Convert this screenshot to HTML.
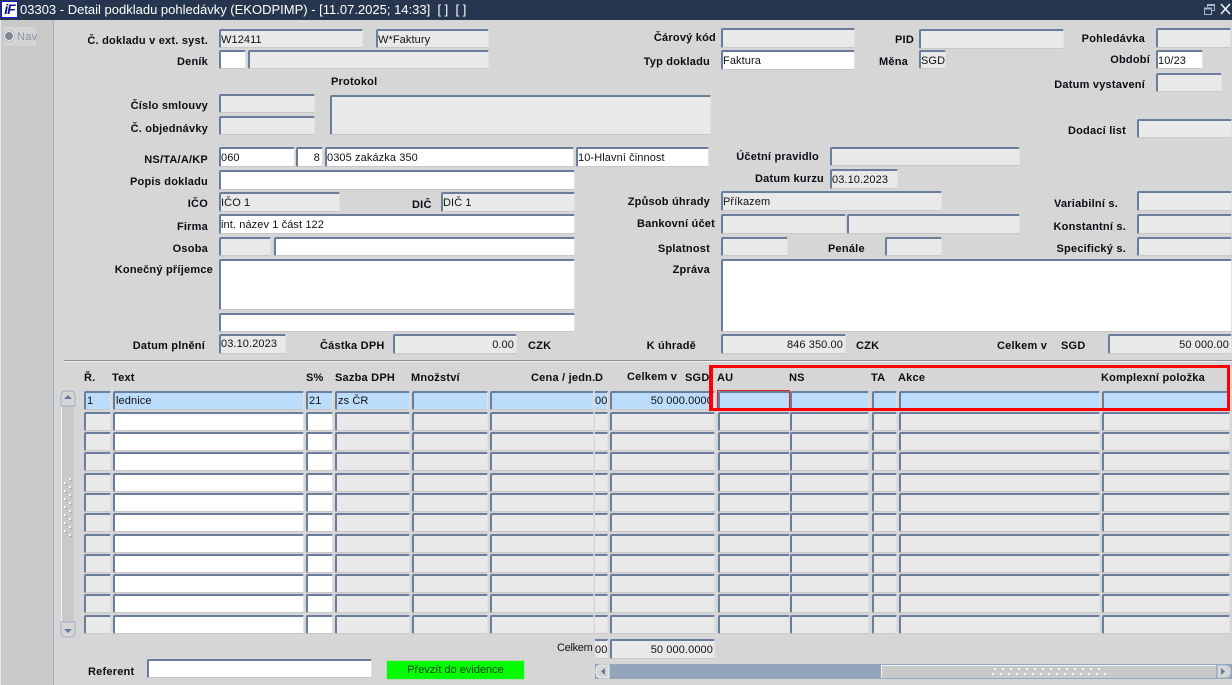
<!DOCTYPE html>
<html><head><meta charset="utf-8"><title>03303</title>
<style>
html,body{margin:0;padding:0}
body{width:1232px;height:685px;position:relative;overflow:hidden;background:#d6d6d6;font:11px "Liberation Sans",sans-serif;color:#000}
div{box-sizing:border-box;position:absolute}
.l{font-weight:bold;white-space:nowrap;line-height:14px;height:14px;color:#0c0c14;letter-spacing:.22px;margin-top:1px}
.f{background:#e9e9e9;border-style:solid;border-color:#6a7d9c #e2e2e2 #c8c8c8 #6a7d9c;border-width:2px 1px 1px 2px;border-radius:2px;line-height:19px;padding-left:0;white-space:nowrap;overflow:hidden;color:#111;letter-spacing:.1px}
.w{background:#fff}
.r{text-align:right;padding-right:2px}
.row{left:0;width:1232px;height:19px}
.row .f{top:0;height:100%;padding-left:1px;line-height:17px}
.b .f{background:#bbdcfb}
.a{left:84px;width:27px}.c{left:113px;width:191px}.d{left:306px;width:27px}.e{left:335px;width:75px}.g{left:412px;width:76px}.h{left:490px;width:104px}.row .i{left:595px;width:13px;border-left:0;padding:0;text-align:right;border-radius:0}.j{left:610px;width:105px}.k{left:718px;width:72px}.m{left:790px;width:79px}.n{left:872px;width:25px}.o{left:899px;width:201px}.p{left:1102px;width:128px}
.a2 .c,.a2 .d{background:#fff}
.dots{width:2px;height:2px;background:#f4f6fa;box-shadow:1px 1px 0 #9aa9bf}
</style></head><body>

<!-- title bar -->
<div style="left:0;top:0;width:1232px;height:20px;background:#27364f"></div>
<div style="left:1px;top:1px;width:17px;height:17px;background:#fff;border:1px solid #1a1ad0;color:#10109a;font:italic bold 14px/15px 'Liberation Sans',sans-serif;text-align:center;letter-spacing:-1px">iF</div>
<div style="left:20px;top:1px;height:18px;line-height:18px;font-size:13px;color:#fff;white-space:nowrap">03303 - Detail podkladu pohledávky (EKODPIMP) - [11.07.2025; 14:33]&nbsp; [ ]&nbsp; [ ]</div>
<svg style="position:absolute;left:1204px;top:4px" width="11" height="11" viewBox="0 0 11 11"><path d="M3.500 3V.5H10.500V6.500H8M.5 4H7.500V10.500H.5Z" fill="none" stroke="#aab4c4"/><path d="M3 1.500H11M0 5H8" stroke="#aab4c4"/></svg>
<svg style="position:absolute;left:1220px;top:3px" width="11" height="12" viewBox="0 0 11 12"><path d="M1 1L10 11M10 1L1 11" stroke="#f2f4f8" stroke-width="1.500"/></svg>

<!-- nav strip -->
<div style="left:1px;top:20px;width:52px;height:665px;background:#c9c9c9"></div>
<div style="left:53px;top:20px;width:1px;height:665px;background:#9fb0c6"></div>
<div style="left:0;top:20px;width:1px;height:665px;background:#e8e8e8"></div>
<div style="left:4px;top:27px;width:32px;height:19px;background:#d4d4d4"></div>
<div style="left:4px;top:31px;width:10px;height:10px;border-radius:50%;background:#7f8590;border:1px solid #eef1f5;box-shadow:0 0 0 1px #b4c0d2"></div>
<div style="left:17px;top:30px;line-height:14px;color:#8894aa;font-size:11px;letter-spacing:.3px">Nav</div>

<!-- upper labels -->
<div class="l" style="right:1024px;top:33px">Č. dokladu v ext. syst.</div>
<div class="l" style="right:1024px;top:54px">Deník</div>
<div class="l" style="left:331px;top:74px">Protokol</div>
<div class="l" style="right:1024px;top:98px">Číslo smlouvy</div>
<div class="l" style="right:1024px;top:121px">Č. objednávky</div>
<div class="l" style="right:1024px;top:152px">NS/TA/A/KP</div>
<div class="l" style="right:1024px;top:174px">Popis dokladu</div>
<div class="l" style="right:1024px;top:196px">IČO</div>
<div class="l" style="left:412px;top:197px">DIČ</div>
<div class="l" style="right:1024px;top:219px">Firma</div>
<div class="l" style="right:1024px;top:241px">Osoba</div>
<div class="l" style="right:1019px;top:262px">Konečný příjemce</div>
<div class="l" style="right:1027px;top:338px">Datum plnění</div>
<div class="l" style="left:320px;top:338px">Částka DPH</div>
<div class="l" style="left:528px;top:338px">CZK</div>
<div class="l" style="right:516px;top:30px">Čárový kód</div>
<div class="l" style="right:522px;top:54px">Typ dokladu</div>
<div class="l" style="right:318px;top:32px">PID</div>
<div class="l" style="right:324px;top:54px">Měna</div>
<div class="l" style="right:87px;top:31px">Pohledávka</div>
<div class="l" style="right:82px;top:52px">Období</div>
<div class="l" style="right:87px;top:77px">Datum vystavení</div>
<div class="l" style="right:106px;top:123px">Dodací list</div>
<div class="l" style="right:413px;top:149px">Účetní pravidlo</div>
<div class="l" style="right:408px;top:171px">Datum kurzu</div>
<div class="l" style="right:522px;top:194px">Způsob úhrady</div>
<div class="l" style="right:114px;top:196px">Variabilní s.</div>
<div class="l" style="right:517px;top:216px">Bankovní účet</div>
<div class="l" style="right:106px;top:219px">Konstantní s.</div>
<div class="l" style="right:522px;top:241px">Splatnost</div>
<div class="l" style="left:828px;top:241px">Penále</div>
<div class="l" style="right:106px;top:241px">Specifický s.</div>
<div class="l" style="right:522px;top:262px">Zpráva</div>
<div class="l" style="right:536px;top:338px">K úhradě</div>
<div class="l" style="left:856px;top:338px">CZK</div>
<div class="l" style="left:997px;top:338px">Celkem v</div>
<div class="l" style="left:1061px;top:338px">SGD</div>

<!-- upper fields -->
<div class="f" style="left:219px;top:29px;width:144px;height:19px">W12411</div>
<div class="f" style="left:376px;top:29px;width:113px;height:19px">W*Faktury</div>
<div class="f w" style="left:219px;top:50px;width:27px;height:19px"></div>
<div class="f" style="left:248px;top:50px;width:241px;height:19px"></div>
<div class="f" style="left:219px;top:94px;width:96px;height:19px"></div>
<div class="f" style="left:219px;top:116px;width:96px;height:19px"></div>
<div class="f" style="left:330px;top:95px;width:381px;height:40px"></div>
<div class="f w" style="left:219px;top:147px;width:76px;height:20px">060</div>
<div class="f w r" style="left:296px;top:147px;width:27px;height:20px">8</div>
<div class="f w" style="left:325px;top:147px;width:249px;height:20px">0305 zakázka 350</div>
<div class="f w" style="left:576px;top:147px;width:133px;height:20px">10-Hlavní činnost</div>
<div class="f w" style="left:219px;top:170px;width:356px;height:20px"></div>
<div class="f" style="left:219px;top:192px;width:121px;height:20px">IČO 1</div>
<div class="f" style="left:441px;top:192px;width:134px;height:20px">DIČ 1</div>
<div class="f w" style="left:219px;top:214px;width:356px;height:20px">int. název 1 část 122</div>
<div class="f" style="left:219px;top:237px;width:52px;height:19px"></div>
<div class="f w" style="left:274px;top:237px;width:301px;height:19px"></div>
<div class="f w" style="left:219px;top:259px;width:356px;height:51px"></div>
<div class="f w" style="left:219px;top:313px;width:356px;height:19px"></div>
<div class="f" style="left:219px;top:334px;width:67px;height:20px;line-height:17px">03.10.2023</div>
<div class="f r" style="left:393px;top:334px;width:124px;height:20px">0.00</div>
<div class="f" style="left:721px;top:28px;width:134px;height:20px"></div>
<div class="f w" style="left:721px;top:50px;width:134px;height:20px;line-height:18px">Faktura</div>
<div class="f" style="left:919px;top:29px;width:145px;height:20px"></div>
<div class="f" style="left:919px;top:50px;width:27px;height:19px;line-height:18px">SGD</div>
<div class="f" style="left:1156px;top:28px;width:75px;height:20px"></div>
<div class="f w" style="left:1156px;top:50px;width:47px;height:19px">10/23</div>
<div class="f" style="left:1156px;top:73px;width:66px;height:19px"></div>
<div class="f" style="left:1137px;top:119px;width:95px;height:19px"></div>
<div class="f" style="left:830px;top:147px;width:190px;height:19px"></div>
<div class="f" style="left:830px;top:169px;width:68px;height:20px">03.10.2023</div>
<div class="f" style="left:721px;top:191px;width:221px;height:20px">Příkazem</div>
<div class="f" style="left:1137px;top:191px;width:95px;height:20px"></div>
<div class="f" style="left:721px;top:214px;width:125px;height:20px"></div>
<div class="f" style="left:847px;top:214px;width:173px;height:20px"></div>
<div class="f" style="left:1137px;top:214px;width:95px;height:20px"></div>
<div class="f" style="left:721px;top:237px;width:67px;height:19px"></div>
<div class="f" style="left:885px;top:237px;width:57px;height:19px"></div>
<div class="f" style="left:1137px;top:237px;width:95px;height:19px"></div>
<div class="f w" style="left:721px;top:259px;width:511px;height:73px"></div>
<div class="f r" style="left:721px;top:334px;width:125px;height:20px">846 350.00</div>
<div class="f r" style="left:1108px;top:334px;width:124px;height:20px">50 000.00</div>

<!-- separator -->
<div style="left:64px;top:360px;width:1168px;height:1px;background:#8f8f8f"></div>
<div style="left:64px;top:361px;width:1168px;height:1px;background:#f4f4f4"></div>

<!-- headers -->
<div class="l" style="left:84px;top:370px">Ř.</div>
<div class="l" style="left:112px;top:370px">Text</div>
<div class="l" style="left:306px;top:370px">S%</div>
<div class="l" style="left:335px;top:370px">Sazba DPH</div>
<div class="l" style="left:411px;top:370px">Množství</div>
<div class="l" style="left:531px;top:370px;width:64px;overflow:hidden">Cena / jedn.</div>
<div class="l" style="left:595px;top:370px">D</div>
<div class="l" style="left:627px;top:369px">Celkem v</div>
<div class="l" style="left:685px;top:370px">SGD</div>
<div class="l" style="left:717px;top:370px">AU</div>
<div class="l" style="left:789px;top:370px">NS</div>
<div class="l" style="left:871px;top:370px">TA</div>
<div class="l" style="left:898px;top:370px">Akce</div>
<div class="l" style="left:1101px;top:370px">Komplexní položka</div>

<!-- rows -->
<div class="row b" style="top:391px"><div class="f a">1</div><div class="f c">lednice</div><div class="f d">21</div><div class="f e">zs ČR</div><div class="f g"></div><div class="f h"></div><div class="f i">00</div><div class="f j r" style="padding-right:1px">50 000.0000</div><div class="f k"></div><div class="f m"></div><div class="f n"></div><div class="f o"></div><div class="f p"></div></div>
<div class="row a2" style="top:412px"><div class="f a"></div><div class="f c"></div><div class="f d"></div><div class="f e"></div><div class="f g"></div><div class="f h"></div><div class="f i"></div><div class="f j"></div><div class="f k"></div><div class="f m"></div><div class="f n"></div><div class="f o"></div><div class="f p"></div></div>
<div class="row a2" style="top:432px"><div class="f a"></div><div class="f c"></div><div class="f d"></div><div class="f e"></div><div class="f g"></div><div class="f h"></div><div class="f i"></div><div class="f j"></div><div class="f k"></div><div class="f m"></div><div class="f n"></div><div class="f o"></div><div class="f p"></div></div>
<div class="row a2" style="top:452px"><div class="f a"></div><div class="f c"></div><div class="f d"></div><div class="f e"></div><div class="f g"></div><div class="f h"></div><div class="f i"></div><div class="f j"></div><div class="f k"></div><div class="f m"></div><div class="f n"></div><div class="f o"></div><div class="f p"></div></div>
<div class="row a2" style="top:473px"><div class="f a"></div><div class="f c"></div><div class="f d"></div><div class="f e"></div><div class="f g"></div><div class="f h"></div><div class="f i"></div><div class="f j"></div><div class="f k"></div><div class="f m"></div><div class="f n"></div><div class="f o"></div><div class="f p"></div></div>
<div class="row a2" style="top:493px"><div class="f a"></div><div class="f c"></div><div class="f d"></div><div class="f e"></div><div class="f g"></div><div class="f h"></div><div class="f i"></div><div class="f j"></div><div class="f k"></div><div class="f m"></div><div class="f n"></div><div class="f o"></div><div class="f p"></div></div>
<div class="row a2" style="top:513px"><div class="f a"></div><div class="f c"></div><div class="f d"></div><div class="f e"></div><div class="f g"></div><div class="f h"></div><div class="f i"></div><div class="f j"></div><div class="f k"></div><div class="f m"></div><div class="f n"></div><div class="f o"></div><div class="f p"></div></div>
<div class="row a2" style="top:534px"><div class="f a"></div><div class="f c"></div><div class="f d"></div><div class="f e"></div><div class="f g"></div><div class="f h"></div><div class="f i"></div><div class="f j"></div><div class="f k"></div><div class="f m"></div><div class="f n"></div><div class="f o"></div><div class="f p"></div></div>
<div class="row a2" style="top:554px"><div class="f a"></div><div class="f c"></div><div class="f d"></div><div class="f e"></div><div class="f g"></div><div class="f h"></div><div class="f i"></div><div class="f j"></div><div class="f k"></div><div class="f m"></div><div class="f n"></div><div class="f o"></div><div class="f p"></div></div>
<div class="row a2" style="top:574px"><div class="f a"></div><div class="f c"></div><div class="f d"></div><div class="f e"></div><div class="f g"></div><div class="f h"></div><div class="f i"></div><div class="f j"></div><div class="f k"></div><div class="f m"></div><div class="f n"></div><div class="f o"></div><div class="f p"></div></div>
<div class="row a2" style="top:594px"><div class="f a"></div><div class="f c"></div><div class="f d"></div><div class="f e"></div><div class="f g"></div><div class="f h"></div><div class="f i"></div><div class="f j"></div><div class="f k"></div><div class="f m"></div><div class="f n"></div><div class="f o"></div><div class="f p"></div></div>
<div class="row a2" style="top:615px"><div class="f a"></div><div class="f c"></div><div class="f d"></div><div class="f e"></div><div class="f g"></div><div class="f h"></div><div class="f i"></div><div class="f j"></div><div class="f k"></div><div class="f m"></div><div class="f n"></div><div class="f o"></div><div class="f p"></div></div>

<!-- vertical scrollbar -->
<div style="left:61px;top:400px;width:1px;height:225px;background:#f4f4f4"></div>
<div style="left:62px;top:405px;width:12px;height:218px;background:#c9c9c9"></div>
<svg style="position:absolute;left:60px;top:390px" width="16" height="17" viewBox="0 0 16 17"><path d="M1 16V6Q1 1 6 1H10Q15 1 15 6V16Z" fill="#d6d6d6" stroke="#9fb0c6"/><path d="M4 9L8 5L12 9Z" fill="#66799a"/></svg>
<svg style="position:absolute;left:60px;top:621px" width="16" height="17" viewBox="0 0 16 17"><path d="M1 1V11Q1 16 6 16H10Q15 16 15 11V1Z" fill="#d6d6d6" stroke="#9fb0c6"/><path d="M4 8L8 12L12 8Z" fill="#66799a"/></svg>
<div class="dots" style="left:64px;top:482px"></div><div class="dots" style="left:69px;top:478px"></div>
<div class="dots" style="left:64px;top:490px"></div><div class="dots" style="left:69px;top:486px"></div>
<div class="dots" style="left:64px;top:498px"></div><div class="dots" style="left:69px;top:494px"></div>
<div class="dots" style="left:64px;top:506px"></div><div class="dots" style="left:69px;top:502px"></div>
<div class="dots" style="left:64px;top:514px"></div><div class="dots" style="left:69px;top:510px"></div>
<div class="dots" style="left:64px;top:522px"></div><div class="dots" style="left:69px;top:518px"></div>
<div class="dots" style="left:64px;top:530px"></div><div class="dots" style="left:69px;top:526px"></div>
<div class="dots" style="left:69px;top:534px"></div>

<!-- red highlight -->
<div style="left:717px;top:390px;width:73px;height:19px;border:1px solid #e02020"></div>
<div style="left:709px;top:365px;width:521px;height:46px;border-style:solid;border-color:#fe0000;border-width:3px 3px 3px 4px"></div>

<!-- bottom -->
<div style="left:557px;top:641px;line-height:14px;white-space:nowrap;color:#111;letter-spacing:-.3px">Celkem</div>
<div class="f" style="left:595px;top:639px;width:13px;height:20px;padding:0;text-align:right;border-left:0;border-radius:0;line-height:18px">00</div>
<div class="f r" style="left:610px;top:639px;width:105px;height:20px;padding-right:1px;line-height:18px">50 000.0000</div>
<div class="l" style="left:88px;top:664px">Referent</div>
<div class="f w" style="left:147px;top:659px;width:225px;height:19px"></div>
<div style="left:386px;top:660px;width:139px;height:20px;background:#00fe00;border:1px solid #b8d8b8;text-align:center;line-height:18px;color:#123a12">Převzít do evidence</div>

<!-- horizontal scrollbar -->
<div style="left:595px;top:664px;width:637px;height:15px;background:#93a5ba"></div>
<svg style="position:absolute;left:595px;top:664px" width="15" height="15" viewBox="0 0 15 15"><path d="M14 1H6Q1 1 1 7.500Q1 14 6 14H14Z" fill="#d6d6d6" stroke="#f4f4f4"/><path d="M10 4V11L6 7.500Z" fill="#66799a"/></svg>
<div style="left:881px;top:665px;width:335px;height:13px;background:#c9c9c9;border-top:1px solid #f4f4f4;border-left:1px solid #f4f4f4"></div>
<svg style="position:absolute;left:1216px;top:664px" width="16" height="15" viewBox="0 0 16 15"><path d="M1 1H9Q15 1 15 7.500Q15 14 9 14H1Z" fill="#d6d6d6" stroke="#9fb0c6"/><path d="M5 4V11L9 7.500Z" fill="#66799a"/></svg>
<svg style="position:absolute;left:992px;top:668px" width="120" height="10" viewBox="0 0 120 10"><g fill="#f4f6fa"><path d="M2 0h2v2H2zM10 0h2v2h-2zM18 0h2v2h-2zM26 0h2v2h-2zM34 0h2v2h-2zM42 0h2v2h-2zM50 0h2v2h-2zM58 0h2v2h-2zM66 0h2v2h-2zM74 0h2v2h-2zM82 0h2v2h-2zM90 0h2v2h-2zM98 0h2v2h-2zM106 0h2v2h-2z"/><path d="M0 5h2v2H0zM8 5h2v2H8zM16 5h2v2h-2zM24 5h2v2h-2zM32 5h2v2h-2zM40 5h2v2h-2zM48 5h2v2h-2zM56 5h2v2h-2zM64 5h2v2h-2zM72 5h2v2h-2zM80 5h2v2h-2zM88 5h2v2h-2zM96 5h2v2h-2zM104 5h2v2h-2zM112 5h2v2h-2z"/></g></svg>
</body></html>
